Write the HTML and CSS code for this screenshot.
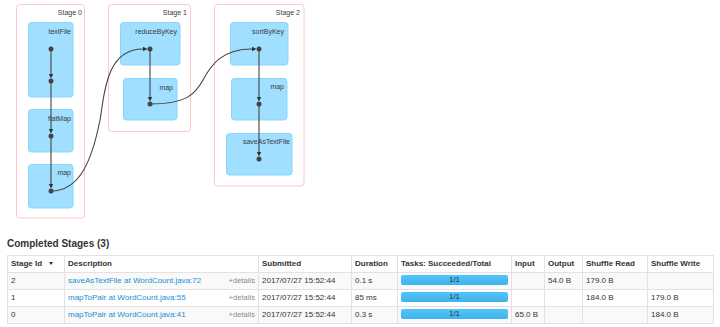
FILE: index.html
```html
<!DOCTYPE html>
<html>
<head>
<meta charset="utf-8">
<title>Spark Job</title>
<link rel="stylesheet" href="styles.css">
</head>
<body>
<div class="dag">
  <svg class="dag-svg" width="720" height="238" viewBox="0 0 720 238">
    <rect class="stage-box" x="16.5" y="4.5" width="68" height="213.5" rx="3"/>
    <rect class="stage-box" x="108.5" y="4.5" width="82" height="127" rx="3"/>
    <rect class="stage-box" x="214.5" y="4.5" width="89.5" height="181.5" rx="3"/>
    <text class="lbl" x="82" y="15">Stage 0</text>
    <text class="lbl" x="187" y="15">Stage 1</text>
    <text class="lbl" x="300" y="15">Stage 2</text>

    <rect class="rdd-box" x="28.5" y="22.5" width="44.5" height="74.5" rx="3"/>
    <rect class="rdd-box" x="28.5" y="109.5" width="44.5" height="42.5" rx="3"/>
    <rect class="rdd-box" x="28.5" y="164.5" width="44.5" height="43.5" rx="3"/>
    <rect class="rdd-box" x="120.5" y="22.5" width="59.5" height="42.5" rx="3"/>
    <rect class="rdd-box" x="123.5" y="78.5" width="53.5" height="41.5" rx="3"/>
    <rect class="rdd-box" x="230.5" y="22.5" width="57.5" height="42.5" rx="3"/>
    <rect class="rdd-box" x="231.5" y="78.5" width="55.5" height="41.5" rx="3"/>
    <rect class="rdd-box" x="226.5" y="133.5" width="65.5" height="41.5" rx="3"/>

    <text class="lbl" x="71" y="33.5">textFile</text>
    <text class="lbl" x="71" y="120.5">flatMap</text>
    <text class="lbl" x="71" y="175">map</text>
    <text class="lbl" x="177" y="34">reduceByKey</text>
    <text class="lbl" x="173" y="89.5">map</text>
    <text class="lbl" x="284" y="34">sortByKey</text>
    <text class="lbl" x="284" y="89">map</text>
    <text class="lbl" x="290" y="143.5">saveAsTextFile</text>

    <path class="edge" d="M51,49 V74 M51,81 V129 M51,136 V184"/>
    <path class="edge" d="M150,49 V97"/>
    <path class="edge" d="M259,49 V97 M259,104 V152"/>
    <path class="edge" d="M51,191 C80,191 92,160 100,120 C104,100 104,49 143,49"/>
    <path class="edge" d="M150,104 C185,104 195,95 203,80 C211,65 222,49 252,49"/>

    <polygon class="arrow" points="48.8,74 53.2,74 51,78.5"/>
    <polygon class="arrow" points="48.8,129 53.2,129 51,133.5"/>
    <polygon class="arrow" points="48.8,184 53.2,184 51,188.5"/>
    <polygon class="arrow" points="147.8,97 152.2,97 150,101.5"/>
    <polygon class="arrow" points="256.8,97 261.2,97 259,101.5"/>
    <polygon class="arrow" points="256.8,152 261.2,152 259,156.5"/>
    <polygon class="arrow" points="143,46.8 143,51.2 147.5,49"/>
    <polygon class="arrow" points="252,46.8 252,51.2 256.5,49"/>

    <circle class="dot" cx="51" cy="49" r="2.5"/>
    <circle class="dot" cx="51" cy="81" r="2.5"/>
    <circle class="dot" cx="51" cy="136" r="2.5"/>
    <circle class="dot" cx="51" cy="191" r="2.5"/>
    <circle class="dot" cx="150" cy="49" r="2.5"/>
    <circle class="dot" cx="150" cy="104" r="2.5"/>
    <circle class="dot" cx="259" cy="49" r="2.5"/>
    <circle class="dot" cx="259" cy="104" r="2.5"/>
    <circle class="dot" cx="259" cy="159" r="2.5"/>
  </svg>
</div>

<div class="section">
  <h4 class="title">Completed Stages (3)</h4>
  <table class="stages">
    <colgroup>
      <col class="c-id"><col class="c-desc"><col class="c-sub"><col class="c-dur"><col class="c-tasks"><col class="c-in"><col class="c-out"><col class="c-sr"><col class="c-sw">
    </colgroup>
    <thead>
      <tr>
        <th>Stage Id <span class="sort"></span></th>
        <th>Description</th>
        <th>Submitted</th>
        <th>Duration</th>
        <th>Tasks: Succeeded/Total</th>
        <th>Input</th>
        <th>Output</th>
        <th>Shuffle Read</th>
        <th>Shuffle Write</th>
      </tr>
    </thead>
    <tbody>
      <tr>
        <td>2</td>
        <td><span class="more">+details</span><a class="link" href="#">saveAsTextFile at WordCount.java:72</a></td>
        <td>2017/07/27 15:52:44</td>
        <td>0.1 s</td>
        <td><div class="bar">1/1</div></td>
        <td></td>
        <td>54.0 B</td>
        <td>179.0 B</td>
        <td></td>
      </tr>
      <tr>
        <td>1</td>
        <td><span class="more">+details</span><a class="link" href="#">mapToPair at WordCount.java:55</a></td>
        <td>2017/07/27 15:52:44</td>
        <td>85 ms</td>
        <td><div class="bar">1/1</div></td>
        <td></td>
        <td></td>
        <td>184.0 B</td>
        <td>179.0 B</td>
      </tr>
      <tr>
        <td>0</td>
        <td><span class="more">+details</span><a class="link" href="#">mapToPair at WordCount.java:41</a></td>
        <td>2017/07/27 15:52:44</td>
        <td>0.3 s</td>
        <td><div class="bar">1/1</div></td>
        <td>65.0 B</td>
        <td></td>
        <td></td>
        <td>184.0 B</td>
      </tr>
    </tbody>
  </table>
</div>
</body>
</html>
```

FILE: styles.css
```css
* {
  box-sizing: border-box;
}

html,
body {
  margin: 0;
  background: #ffffff;
}

body {
  font-family: "Liberation Sans", Arial, sans-serif;
  color: #333333;
  width: 720px;
  height: 327px;
  overflow: hidden;
}

.dag-svg {
  display: block;
}

.stage-box {
  fill: #ffffff;
  stroke: #ffc6d1;
  stroke-width: 1;
}

.rdd-box {
  fill: #a0dfff;
  stroke: #8ad6fb;
  stroke-width: 1;
}

.lbl {
  font-family: "Liberation Sans", Arial, sans-serif;
  font-size: 7px;
  fill: #3a3a3a;
  text-anchor: end;
}

.edge {
  fill: none;
  stroke: #444444;
  stroke-width: 1.1;
}

.arrow {
  fill: #333333;
}

.dot {
  fill: #444444;
}

.section {
  padding: 0 7px;
}

.title {
  margin: 0 0 5px;
  font-size: 10px;
  line-height: 12px;
  font-weight: bold;
  color: #333333;
}

.stages {
  width: 706px;
  table-layout: fixed;
  border-collapse: collapse;
  font-size: 8px;
  line-height: 10px;
}

.stages th,
.stages td {
  border: 1px solid #e2e2e2;
  padding: 3px;
  text-align: left;
  vertical-align: top;
  white-space: nowrap;
  overflow: hidden;
}

.stages th {
  font-weight: bold;
}

.stages tbody tr:nth-child(odd) td {
  background: #f9f9f9;
}

.c-id { width: 57px; }
.c-desc { width: 194px; }
.c-sub { width: 93px; }
.c-dur { width: 46px; }
.c-tasks { width: 114px; }
.c-in { width: 33px; }
.c-out { width: 38px; }
.c-sr { width: 65px; }
.c-sw { width: 66px; }

.sort {
  display: inline-block;
  width: 0;
  height: 0;
  margin-left: 5px;
  vertical-align: 1px;
  border-left: 2px solid transparent;
  border-right: 2px solid transparent;
  border-top: 3px solid #333333;
}

.link {
  color: #1a8fd0;
  text-decoration: none;
}

.more {
  float: right;
  font-size: 7.6px;
  color: #8a8a8a;
}

.bar {
  height: 10px;
  margin-top: -1px;
  border-radius: 2px;
  background-color: #3ec0ff;
  background-image: linear-gradient(to bottom, #52c6fb, #3fb2ec);
  text-align: center;
  font-size: 8px;
  line-height: 10px;
  color: #333333;
}
```
